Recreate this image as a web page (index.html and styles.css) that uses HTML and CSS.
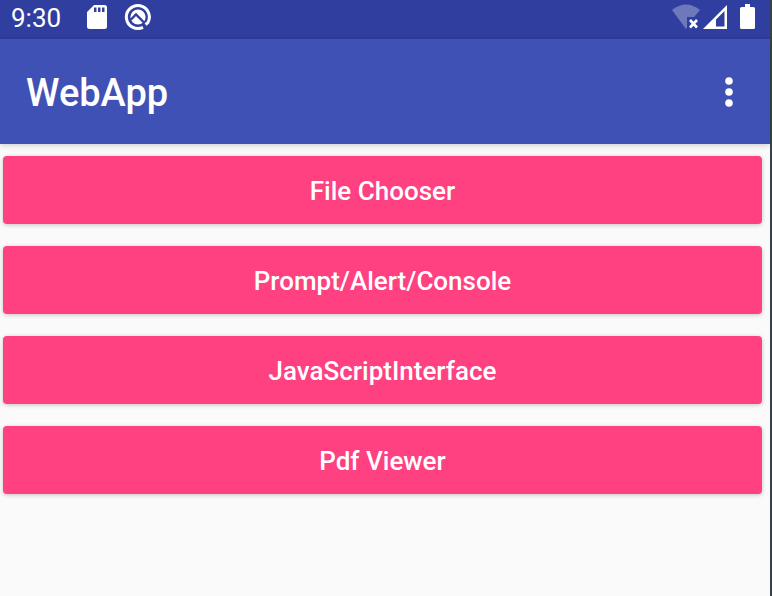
FILE: index.html
```html
<!DOCTYPE html>
<html lang="en">
<head>
<meta charset="utf-8">
<meta name="viewport" content="width=device-width, initial-scale=1">
<title>WebApp</title>
<link rel="stylesheet" href="styles.css">
</head>
<body>
<div class="screen">
  <div class="status-bar">
    <span class="clock">9:30</span>
    <svg class="sd-card" width="20" height="24" viewBox="0 0 20 24" aria-hidden="true">
      <path fill="#fff" fill-rule="evenodd" d="M7 0H17.500Q20 0 20 2.500V21.500Q20 24 17.500 24H2.500Q0 24 0 21.500V7ZM7 2.500V7H9.500V2.500ZM11 2.500V7H13.500V2.500ZM15 2.500V7H17.500V2.500Z"/>
    </svg>
    <svg class="debug" width="28" height="28" viewBox="0 0 28 28" aria-hidden="true">
      <circle cx="14" cy="14" r="7.600" fill="#fff"/>
      <path fill="none" stroke="#303f9f" stroke-width="2.400" d="M6.500 17L12 11.500L22.500 22"/>
      <path fill="none" stroke="#fff" stroke-width="3" d="M19 24.300A11.500 11.500 0 1 1 23.800 19.800L21.500 21.500"/>
    </svg>
    <svg class="wifi" width="28" height="26" viewBox="0 0 28 26" aria-hidden="true">
      <path fill="#fff" fill-opacity=".3" d="M0 6Q14 -5 28 6L22 13H15V23.500L14 25Z"/>
      <path fill="none" stroke="#fff" stroke-width="2.600" d="M18 16L25 23.500M25 16L18 23.500"/>
    </svg>
    <svg class="signal" width="24" height="24" viewBox="0 0 24 24" aria-hidden="true">
      <path fill="#fff" fill-rule="evenodd" d="M24 0V24H0ZM21.500 6L13 14.500V21.500H21.500Z"/>
    </svg>
    <svg class="battery" width="15" height="25" viewBox="0 0 15 25" aria-hidden="true">
      <path fill="#fff" d="M5 0H10V3H13.500Q15 3 15 4.500V23.500Q15 25 13.500 25H1.500Q0 25 0 23.500V4.500Q0 3 1.500 3H5Z"/>
    </svg>
  </div>
  <header class="app-bar">
    <h1 class="title">WebApp</h1>
    <button class="overflow" type="button" aria-label="More options">
      <svg width="8" height="30" viewBox="0 0 8 30" aria-hidden="true">
        <g fill="#fff"><circle cx="4" cy="4" r="3.800"/><circle cx="4" cy="15" r="3.800"/><circle cx="4" cy="26" r="3.800"/></g>
      </svg>
    </button>
  </header>
  <main class="actions">
    <button class="action" type="button">File Chooser</button>
    <button class="action" type="button">Prompt/Alert/Console</button>
    <button class="action" type="button">JavaScriptInterface</button>
    <button class="action" type="button">Pdf Viewer</button>
  </main>
</div>
</body>
</html>
```
FILE: styles.css
```css
* {
  box-sizing: border-box;
}

body {
  margin: 0;
  font-family: Roboto, sans-serif;
  color: #fff;
  background: #fafafa;
}

.screen {
  min-height: 100vh;
  border-right: 2px solid #37434a;
}

.status-bar {
  display: flex;
  align-items: center;
  height: 39px;
  padding: 0 15px 6px 11px;
  background: #303f9f;
}

.clock {
  padding-top: 2px;
  font-size: 26px;
  line-height: 32px;
}

.sd-card {
  margin-left: 26px;
}

.debug {
  margin-left: 17px;
}

.wifi {
  margin-left: auto;
}

.signal {
  margin-left: 3px;
}

.battery {
  margin-left: 13px;
}

.app-bar {
  display: flex;
  align-items: center;
  justify-content: space-between;
  height: 105px;
  padding: 0 32px 0 26px;
  background: #3f51b5;
  box-shadow: 0 1px 6px rgba(0, 0, 0, 0.2);
}

.title {
  margin: 0;
  padding-top: 3px;
  font-size: 38px;
  line-height: 48px;
  font-weight: 500;
}

.overflow {
  display: flex;
  padding: 5px;
  border: 0;
  background: none;
}

.actions {
  display: grid;
  gap: 22px;
  padding: 12px 8px 12px 3px;
}

.action {
  height: 68px;
  padding: 2px 6px 0;
  border: 0;
  border-radius: 4px;
  background: #ff4081;
  box-shadow: 0 1px 4px rgba(0, 0, 0, 0.22);
  color: #fff;
  font: 500 26px/32px Roboto, sans-serif;
}
```
